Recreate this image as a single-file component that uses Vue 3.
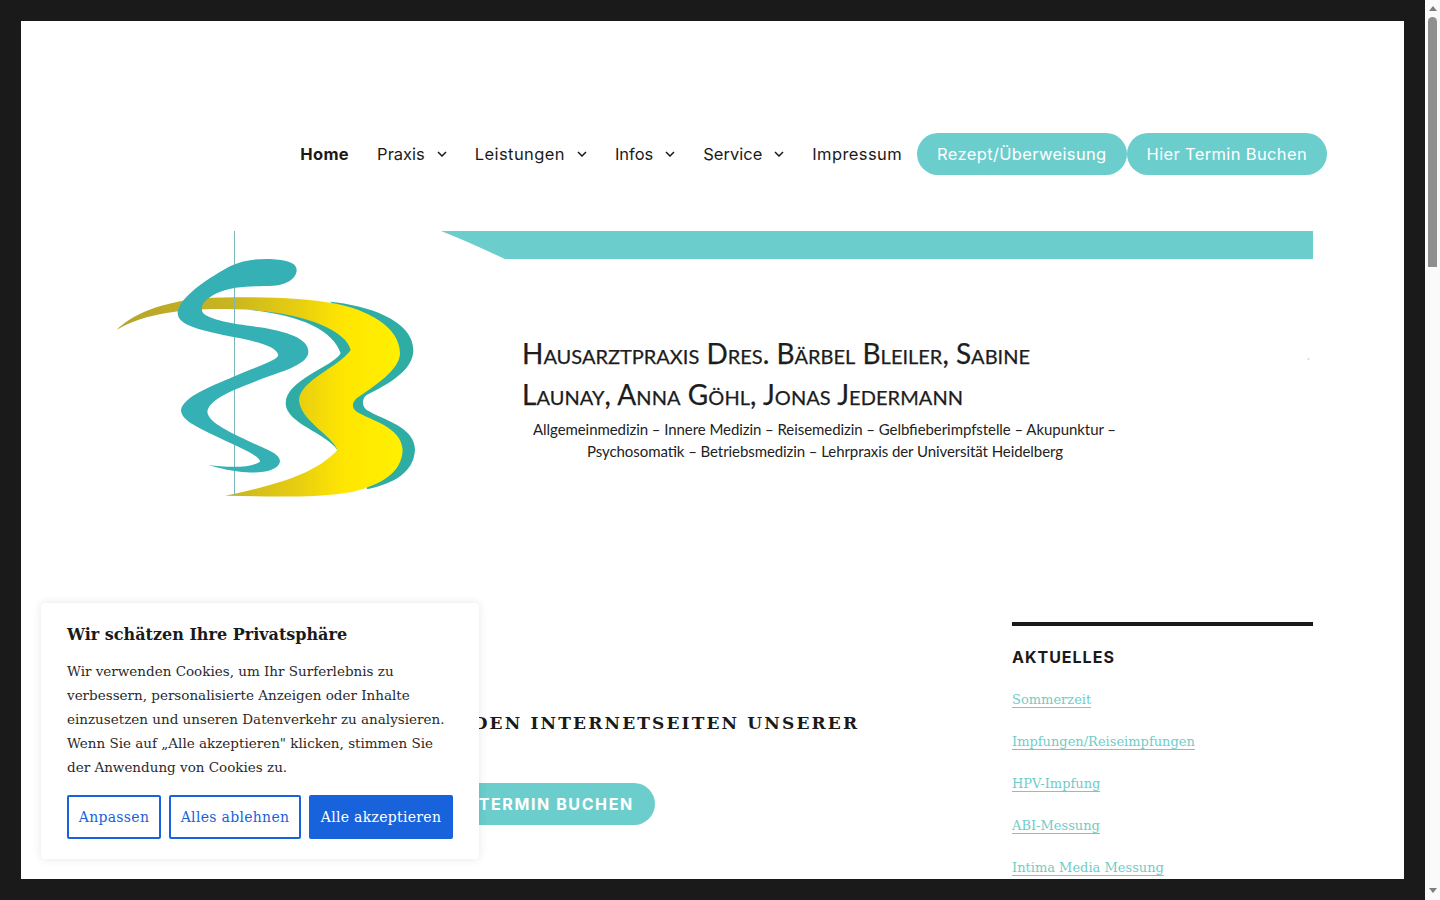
<template>
  <div class="shell">
    <div class="frame">
      <div class="page">
        <nav class="nav">
          <a v-for="item in navItems" :key="item.label" class="nav-item" :class="{ active: item.active, tight: item.tight }">
            {{ item.label }}
            <svg v-if="item.sub" class="chev" width="10" height="6" viewBox="0 0 10 6">
              <path d="M1 1 L5 5 L9 1" fill="none" stroke="#1a1a1a" stroke-width="1.5" />
            </svg>
          </a>
          <a class="pill">Rezept/Überweisung</a>
          <a class="pill">Hier Termin Buchen</a>
        </nav>

        <svg class="banner" viewBox="112 231 1201 280" width="1201" height="280">
          <defs>
            <linearGradient id="gold" gradientUnits="userSpaceOnUse" x1="50" y1="0" x2="900" y2="0">
              <stop offset="0" stop-color="#b5a42c" />
              <stop offset="0.4" stop-color="#c9b520" />
              <stop offset="0.65" stop-color="#e8cf10" />
              <stop offset="0.8" stop-color="#ffe600" />
              <stop offset="1" stop-color="#fff000" />
            </linearGradient>
          </defs>
          <path d="M441 231 L1313 231 L1313 259 L505 259 C485 250 462 239 441 231Z" fill="#6ccdcd" />
          <circle cx="1308.5" cy="359" r="1" fill="#d5d5d5" />
          <g transform="translate(100 220) scale(0.33333)">
            <path d="M690 245 C800 255 940 300 940 390 C940 450 870 490 800 525 C785 535 785 558 800 570 C850 600 945 620 945 690 C940 760 880 790 800 808 L820 700 L750 558 L820 400 L750 290Z" fill="#2fada5" />
            <path d="M450 270 C600 285 700 330 722 400 C700 440 557 480 557 550 C557 610 680 640 712 690 C700 720 670 745 640 765 L665 762 C695 745 720 720 722 690 C700 650 600 600 600 540 C600 480 730 440 760 390 C740 330 600 272 450 270Z" fill="#2fada5" />
            <path d="M50 330 C100 280 180 250 300 235 C450 228 600 232 700 250 C800 268 900 320 900 400 C900 450 820 500 770 535 C755 548 755 565 770 575 C810 600 905 620 908 690 C905 760 840 795 760 815 C650 835 500 830 375 827 C500 800 640 770 712 690 C700 650 600 600 597 540 C600 480 720 440 752 390 C740 330 600 270 400 268 C300 265 150 270 50 330Z" fill="url(#gold)" />
            <rect x="402" y="33" width="3" height="792" fill="#7db4b4" />
            <path d="M590 150 C590 175 560 195 520 197 C470 200 400 195 350 220 C320 235 295 255 310 280 C330 300 400 312 480 322 C560 335 625 355 625 395 C625 430 560 450 490 475 C430 500 330 530 322 575 C325 610 400 640 450 665 C500 690 540 700 540 725 C535 750 490 760 440 757 C400 755 360 745 325 735 C380 742 450 745 480 725 C480 705 400 675 340 645 C290 620 243 600 243 570 C250 530 330 500 400 470 C470 440 535 420 535 405 C530 375 450 360 370 345 C300 330 233 315 233 280 C235 240 300 190 370 150 C410 125 450 117 500 117 C550 118 590 125 590 150Z" fill="#35b0b5" />
          </g>
          <text class="b-title" x="522" y="364" textLength="508">Hausarztpraxis Dres. Bärbel Bleiler, Sabine</text>
          <text class="b-title" x="522" y="405" textLength="441">Launay, Anna Göhl, Jonas Jedermann</text>
          <text class="b-sub" x="533" y="435" textLength="583">Allgemeinmedizin – Innere Medizin – Reisemedizin – Gelbfieberimpfstelle – Akupunktur –</text>
          <text class="b-sub" x="587" y="457" textLength="476">Psychosomatik – Betriebsmedizin – Lehrpraxis der Universität Heidelberg</text>
        </svg>

        <div class="content">
          <main class="main">
            <h2 class="welcome">HERZLICH WILLKOMMEN AUF DEN INTERNETSEITEN UNSERER</h2>
            <div class="cta-row"><a class="cta">HIER TERMIN BUCHEN</a></div>
          </main>
          <aside class="sidebar">
            <h3 class="side-title">AKTUELLES</h3>
            <ul class="side-list">
              <li v-for="link in news" :key="link"><a>{{ link }}</a></li>
            </ul>
          </aside>
        </div>
      </div>
    </div>

    <div class="scrollbar">
      <span class="arrow up"></span>
      <span class="thumb"></span>
      <span class="arrow down"></span>
    </div>

    <div class="cookie">
      <p class="cookie-title">Wir schätzen Ihre Privatsphäre</p>
      <p class="cookie-text">Wir verwenden Cookies, um Ihr Surferlebnis zu verbessern, personalisierte Anzeigen oder Inhalte einzusetzen und unseren Datenverkehr zu analysieren. Wenn Sie auf „Alle akzeptieren" klicken, stimmen Sie der Anwendung von Cookies zu.</p>
      <div class="cookie-btns">
        <button class="btn b1">Anpassen</button>
        <button class="btn b2">Alles ablehnen</button>
        <button class="btn b3 solid">Alle akzeptieren</button>
      </div>
    </div>
  </div>
</template>

<script setup>
const navItems = [
  { label: "Home", active: true },
  { label: "Praxis", sub: true, tight: true },
  { label: "Leistungen", sub: true },
  { label: "Infos", sub: true, tight: true },
  { label: "Service", sub: true, tight: true },
  { label: "Impressum" },
]

const news = [
  "Sommerzeit",
  "Impfungen/Reiseimpfungen",
  "HPV-Impfung",
  "ABI-Messung",
  "Intima Media Messung",
]
</script>

<style>
html, body {
  margin: 0;
  overflow: hidden;
}
</style>

<style scoped>
.shell {
  display: flex;
  height: 900px;
  overflow: hidden;
  position: relative;
  font-family: "DejaVu Serif", serif;
  color: #1a1a1a;
}
.frame {
  flex: 1;
  background: #1a1a1a;
  padding: 21px;
  box-sizing: border-box;
  height: 900px;
}
.page {
  height: 858px;
  background: #fff;
  overflow: hidden;
  padding: 112px 91px 0;
  box-sizing: border-box;
}
.nav {
  display: flex;
  justify-content: flex-end;
  align-items: center;
  height: 42px;
  margin-right: -14px;
  font-family: Inter, sans-serif;
  font-size: 16.5px;
  letter-spacing: 0.4px;
}
.nav-item {
  display: flex;
  align-items: center;
  margin-right: 28px;
  white-space: nowrap;
}
.nav-item.tight {
  letter-spacing: 0;
}
.nav-item:nth-child(6) {
  margin-right: 15px;
}
.nav-item.active {
  font-weight: 700;
}
.chev {
  margin-left: 12px;
}
.pill {
  background: #6ccdcd;
  color: #fff;
  height: 42px;
  line-height: 42px;
  padding: 0 20px;
  border-radius: 21px;
  white-space: nowrap;
  letter-spacing: 0.35px;
}
.banner {
  display: block;
  margin-top: 56px;
}
.b-title {
  font-family: Lato, sans-serif;
  font-variant: small-caps;
  font-size: 28px;
  fill: #1d1d1d;
  stroke: #1d1d1d;
  stroke-width: 0.25px;
}
.b-sub {
  font-family: Lato, sans-serif;
  font-size: 15px;
  fill: #222;
}
.content {
  display: flex;
  justify-content: space-between;
  margin-top: 111px;
}
.main {
  width: 840px;
  padding-top: 89px;
}
.welcome {
  margin: 0;
  font-size: 17px;
  line-height: 24px;
  font-weight: 700;
  letter-spacing: 2.15px;
  white-space: nowrap;
}
.cta-row {
  margin-top: 48px;
  text-align: center;
}
.cta {
  display: inline-block;
  background: #6ccdcd;
  color: #fff;
  font-family: Inter, sans-serif;
  font-weight: 700;
  font-size: 16px;
  letter-spacing: 1.6px;
  height: 42px;
  line-height: 42px;
  padding: 0 21px;
  border-radius: 21px;
  white-space: nowrap;
}
.sidebar {
  width: 301px;
  border-top: 4px solid #1a1a1a;
}
.side-title {
  margin: 21px 0 0;
  font-family: Inter, sans-serif;
  font-size: 16px;
  line-height: 20px;
  font-weight: 700;
  letter-spacing: 1px;
}
.side-list {
  list-style: none;
  margin: 22px 0 0;
  padding: 0;
  font-size: 13px;
  line-height: 21px;
  color: #6fcdc8;
}
.side-list li {
  margin-bottom: 21px;
}
.side-list a {
  border-bottom: 1px solid #6fcdc8;
}
.scrollbar {
  width: 15px;
  background: #fafafa;
  position: relative;
  display: flex;
  flex-direction: column;
  align-items: center;
}
.arrow {
  width: 0;
  height: 0;
  border-left: 4.5px solid transparent;
  border-right: 4.5px solid transparent;
}
.arrow.up {
  border-bottom: 5px solid #7d7d7d;
  margin-top: 6px;
}
.arrow.down {
  border-top: 5px solid #7d7d7d;
  margin-top: auto;
  margin-bottom: 7px;
}
.thumb {
  width: 9px;
  height: 250px;
  margin-top: 6px;
  background: #8f8f8f;
  border-radius: 5px 5px 0 0;
}
.cookie {
  position: absolute;
  left: 41px;
  top: 603px;
  width: 438px;
  height: 256px;
  box-sizing: border-box;
  background: #fff;
  border-radius: 4px;
  box-shadow: 0 0 10px rgba(0, 0, 0, 0.1);
  padding: 21px 26px 0;
}
.cookie-title {
  margin: 0;
  font-size: 16px;
  line-height: 22px;
  font-weight: 700;
}
.cookie-text {
  margin: 13px 0 0;
  font-size: 13.5px;
  line-height: 24px;
  color: #2a2a2a;
}
.cookie-btns {
  display: flex;
  gap: 8px;
  margin-top: 16px;
}
.btn {
  height: 44px;
  box-sizing: border-box;
  background: #fff;
  border: 2px solid #1863dc;
  border-radius: 2px;
  color: #1863dc;
  font-family: "DejaVu Serif", serif;
  font-size: 14px;
  letter-spacing: 0.3px;
  padding: 0;
}
.b1 { width: 94px; }
.b2 { width: 132px; }
.b3 { width: 144px; }
.btn.solid {
  background: #1863dc;
  color: #fff;
}
</style>
